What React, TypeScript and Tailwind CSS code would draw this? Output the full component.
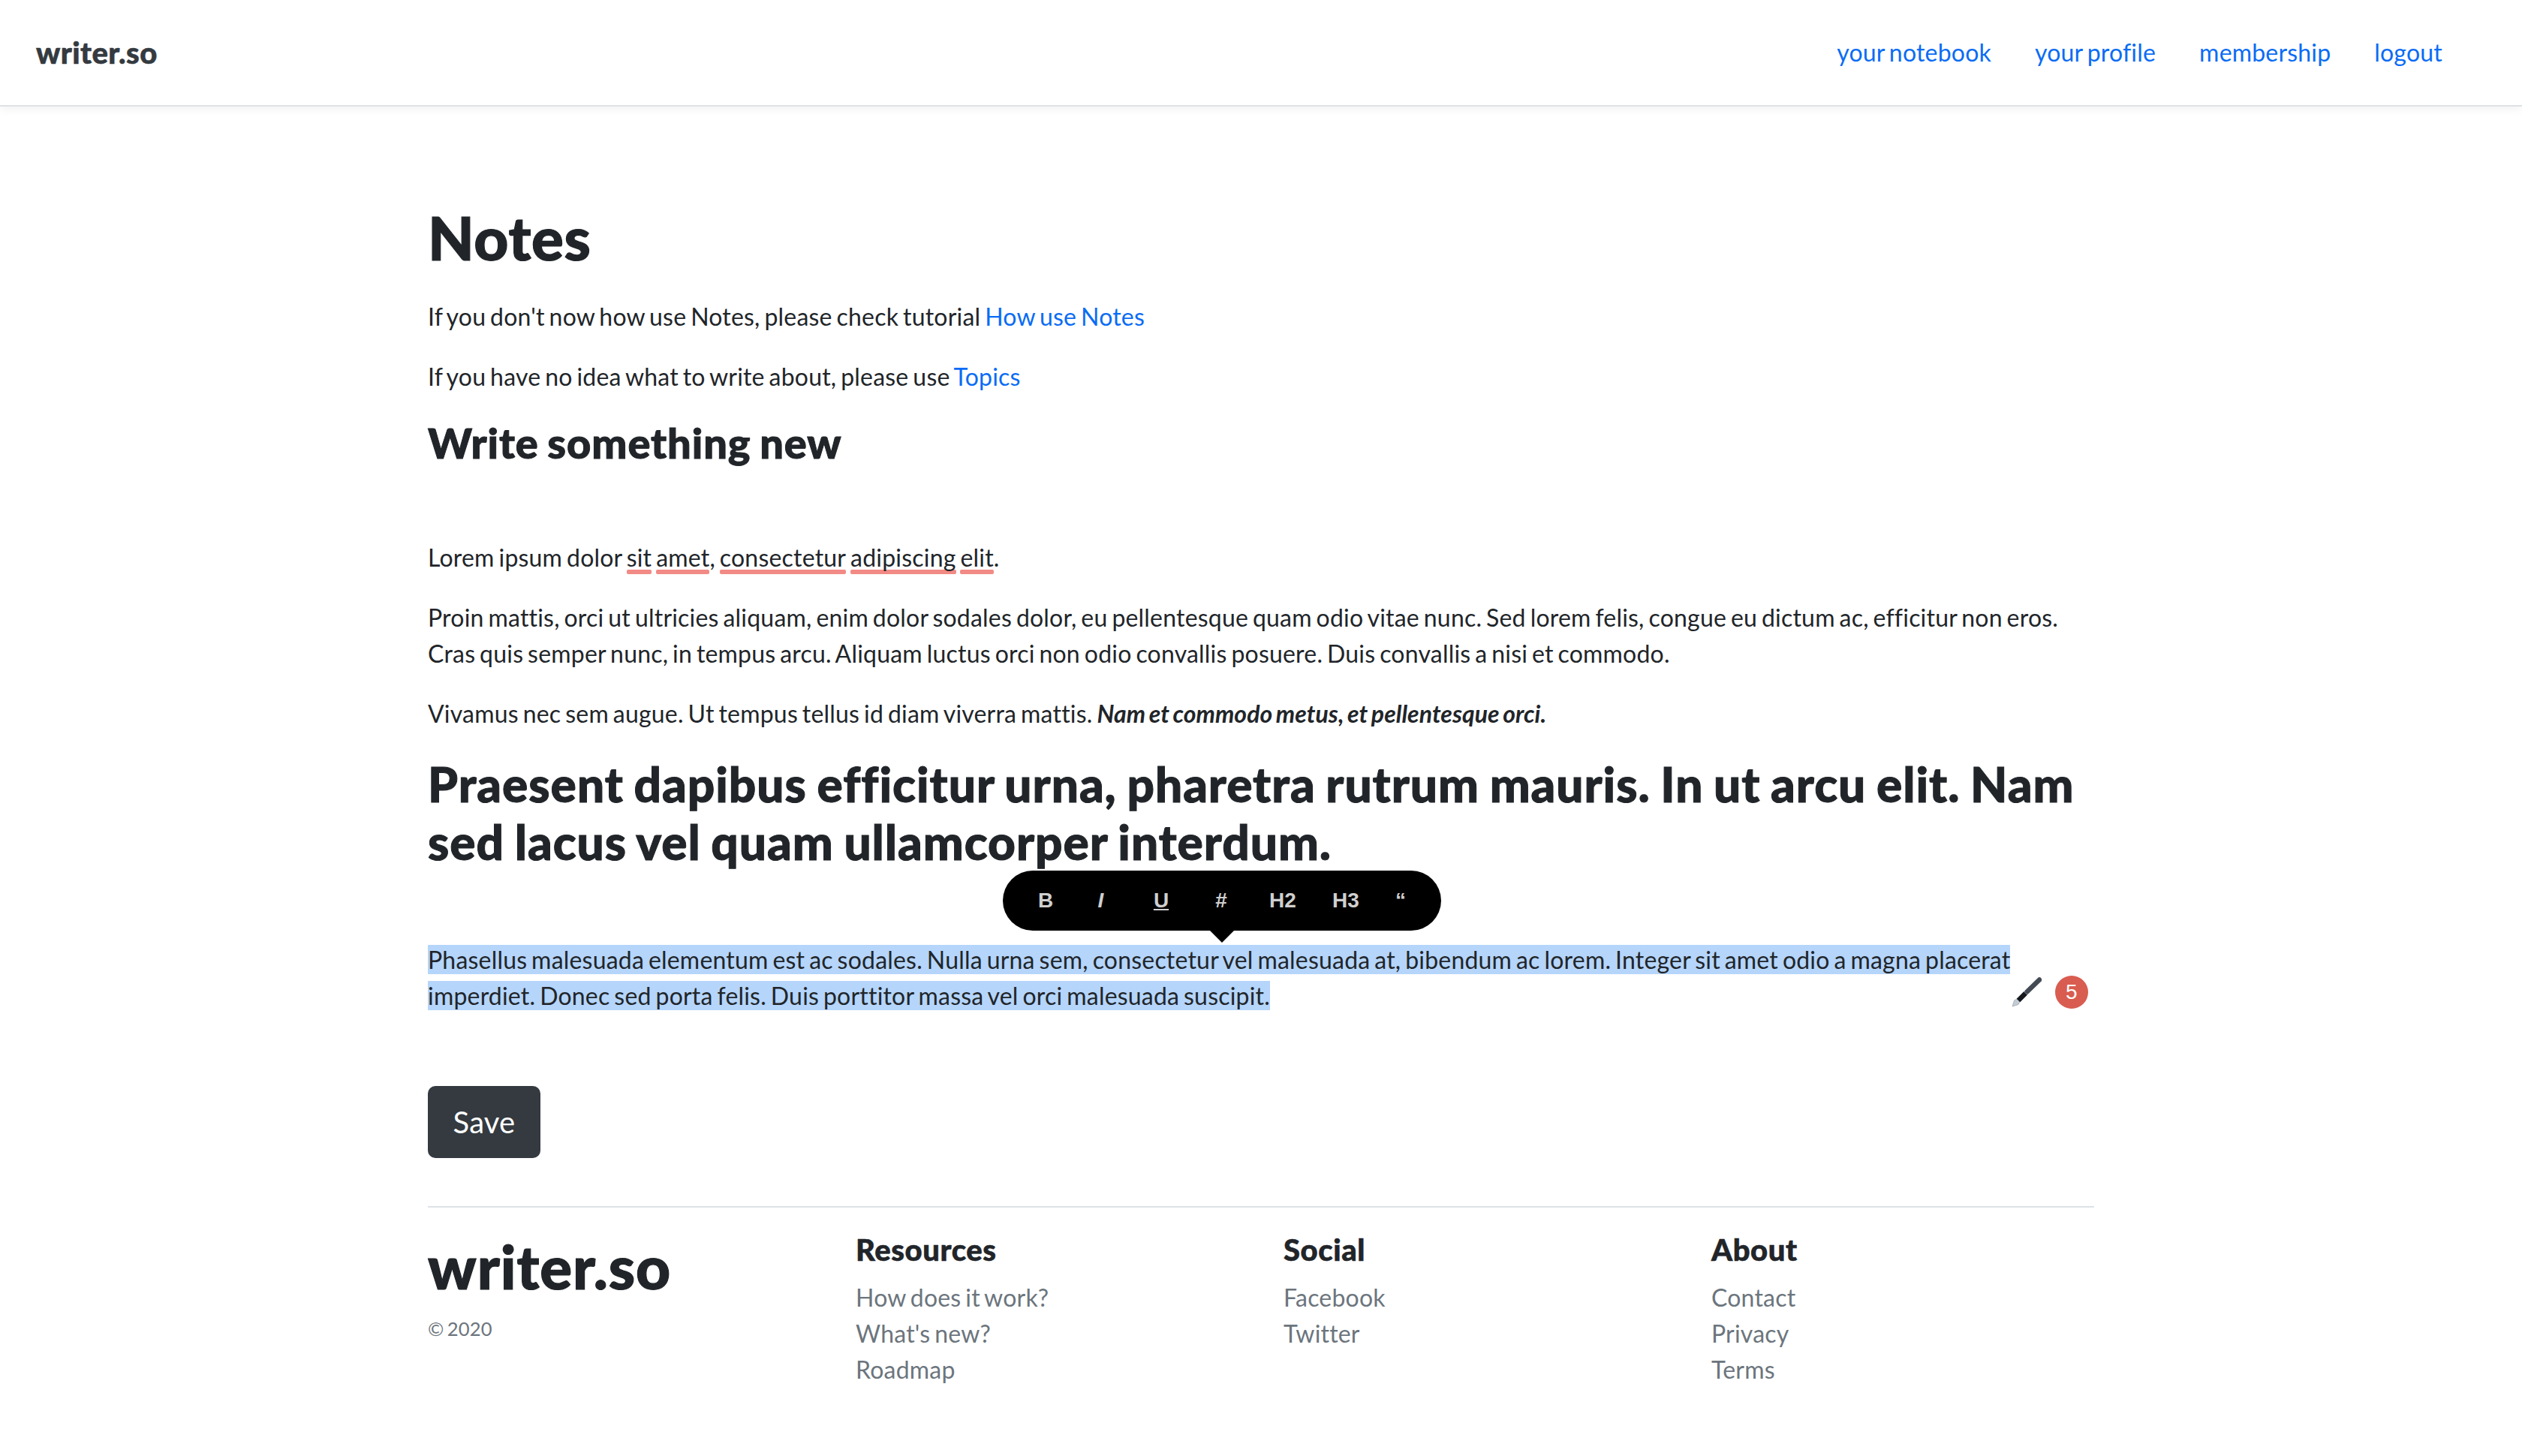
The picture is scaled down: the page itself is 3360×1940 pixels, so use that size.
const navLinks = ["your notebook", "your profile", "membership", "logout"]

const footerColumns = [
  { title: "Resources", links: ["How does it work?", "What's new?", "Roadmap"] },
  { title: "Social", links: ["Facebook", "Twitter"] },
  { title: "About", links: ["Contact", "Privacy", "Terms"] },
]

const tools = [
  { label: "B", className: "w-[74px]" },
  { label: "I", className: "w-[73px] italic" },
  { label: "U", className: "w-[88px] underline underline-offset-2" },
  { label: "#", className: "w-[72px]" },
  { label: "H2", className: "w-[92px]" },
  { label: "H3", className: "w-[76px]" },
  { label: "“", className: "w-[70px]" },
]

function Typo({ children }: { children: string }) {
  return (
    <span className="relative inline-block">
      <span className="absolute left-0 right-0 bottom-[2px] h-[6px] rounded-[2px] bg-[#f28a85]" />
      <span className="relative">{children}</span>
    </span>
  )
}

function PenIcon() {
  return (
    <svg width="40" height="40" viewBox="0 0 40 40" className="block">
      <path d="M1 39 L3.5 31 L8 28.5 L11.5 32 L9 36.5 Z" fill="#c3ccd3" stroke="#8e99a3" strokeWidth="0.6" />
      <line x1="9" y1="31" x2="19" y2="21" stroke="#15181c" strokeWidth="6.5" />
      <line x1="18.5" y1="21.5" x2="21" y2="19" stroke="#9aa3a8" strokeWidth="6.5" />
      <line x1="21" y1="19" x2="37" y2="3.5" stroke="#434a54" strokeWidth="6.5" strokeLinecap="round" />
    </svg>
  )
}

function Toolbar() {
  return (
    <div className="absolute left-[766px] top-[-95px] flex h-[80px] w-[584px] items-center rounded-[40px] bg-black pl-[20px] font-['Liberation_Sans',sans-serif] text-[28px] font-bold tracking-normal text-[#cfcfcf] [word-spacing:0]">
      {tools.map((tool) => (
        <span key={tool.label} className={`text-center leading-none ${tool.className}`}>
          {tool.label}
        </span>
      ))}
      <span className="absolute left-[276px] top-[80px] h-0 w-0 border-x-[16px] border-t-[16px] border-x-transparent border-t-black" />
    </div>
  )
}

export default function App() {
  return (
    <div className="min-h-[1940px] bg-white font-['Lato',sans-serif] text-[32px] leading-[48px] tracking-[0.2px] text-[#212529] [word-spacing:-2.5px]">
      <nav className="flex h-[142px] items-center justify-between border-b-2 border-[#dee2e6] pl-[48px] pr-[106px] shadow-[0_4px_12px_rgba(0,0,0,0.05)]">
        <a className="text-[40px] font-black tracking-[0.4px] text-[#343a40] [-webkit-text-stroke:0.6px]">writer.so</a>
        <div className="flex gap-[58px]">
          {navLinks.map((link) => (
            <a key={link} className="text-[#0a6cf5]">
              {link}
            </a>
          ))}
        </div>
      </nav>

      <main className="mx-auto w-[2220px] pt-[126px]">
        <h1 className="mb-[34px] text-[80px] font-black leading-[96px] tracking-[0.7px] [-webkit-text-stroke:1.2px]">
          Notes
        </h1>
        <p className="mb-[32px]">
          If you don't now how use Notes, please check tutorial <a className="text-[#0a6cf5]">How use Notes</a>
        </p>
        <p className="mb-[30px]">
          If you have no idea what to write about, please use <a className="text-[#0a6cf5]">Topics</a>
        </p>
        <h3 className="mb-[96px] text-[56px] font-black leading-[67px] tracking-[0.9px] [-webkit-text-stroke:1px]">
          Write something new
        </h3>

        <p className="mb-[32px]">
          Lorem ipsum dolor <Typo>sit</Typo> <Typo>amet</Typo>, <Typo>consectetur</Typo> <Typo>adipiscing</Typo>{" "}
          <Typo>elit</Typo>.
        </p>
        <p className="mb-[32px]">
          Proin mattis, orci ut ultricies aliquam, enim dolor sodales dolor, eu pellentesque quam odio vitae nunc. Sed
          lorem felis, congue eu dictum ac, efficitur non eros. Cras quis semper nunc, in tempus arcu. Aliquam luctus
          orci non odio convallis posuere. Duis convallis a nisi et commodo.
        </p>
        <p className="mb-[31px]">
          Vivamus nec sem augue. Ut tempus tellus id diam viverra mattis.{" "}
          <strong className="font-bold italic tracking-[0.05px]">Nam et commodo metus, et pellentesque orci.</strong>
        </p>
        <h2 className="mb-[95px] text-[64px] font-black leading-[77px] tracking-[0.96px] [-webkit-text-stroke:1px]">
          Praesent dapibus efficitur urna, pharetra rutrum mauris. In ut arcu elit. Nam sed lacus vel quam ullamcorper
          interdum.
        </h2>

        <div className="relative mb-[96px]">
          <Toolbar />
          <p>
            <span className="bg-[#b5d5fb]">
              Phasellus malesuada elementum est ac sodales. Nulla urna sem, consectetur vel malesuada at, bibendum ac
              lorem. Integer sit amet odio a magna placerat imperdiet. Donec sed porta felis. Duis porttitor massa vel
              orci malesuada suscipit.
            </span>
          </p>
          <span className="absolute left-[2110px] top-[47px]">
            <PenIcon />
          </span>
          <span className="absolute left-[2168px] top-[45px] flex h-[44px] w-[44px] items-center justify-center rounded-full bg-[#d95c50] font-['Liberation_Sans',sans-serif] text-[28px] leading-none text-white">
            5
          </span>
        </div>

        <button className="mb-[64px] block h-[96px] w-[150px] rounded-[10px] bg-[#343a40] text-[40px] leading-[60px] text-white">
          Save
        </button>

        <footer className="grid grid-cols-[570px_570px_570px_1fr] border-t-2 border-[#dee2e6] pt-[32px]">
          <div>
            <div className="text-[80px] font-black leading-[92px] tracking-[0.9px] [-webkit-text-stroke:1.2px]">
              writer.so
            </div>
            <small className="mt-[18px] block text-[25.6px] leading-[38px] text-[#6c757d]">© 2020</small>
          </div>
          {footerColumns.map((column) => (
            <div key={column.title}>
              <h5 className="mb-[16px] text-[40px] font-black leading-[48px] tracking-[0.6px] [-webkit-text-stroke:0.6px]">
                {column.title}
              </h5>
              <ul>
                {column.links.map((link) => (
                  <li key={link} className="text-[#6c757d]">
                    {link}
                  </li>
                ))}
              </ul>
            </div>
          ))}
        </footer>
      </main>
    </div>
  )
}
